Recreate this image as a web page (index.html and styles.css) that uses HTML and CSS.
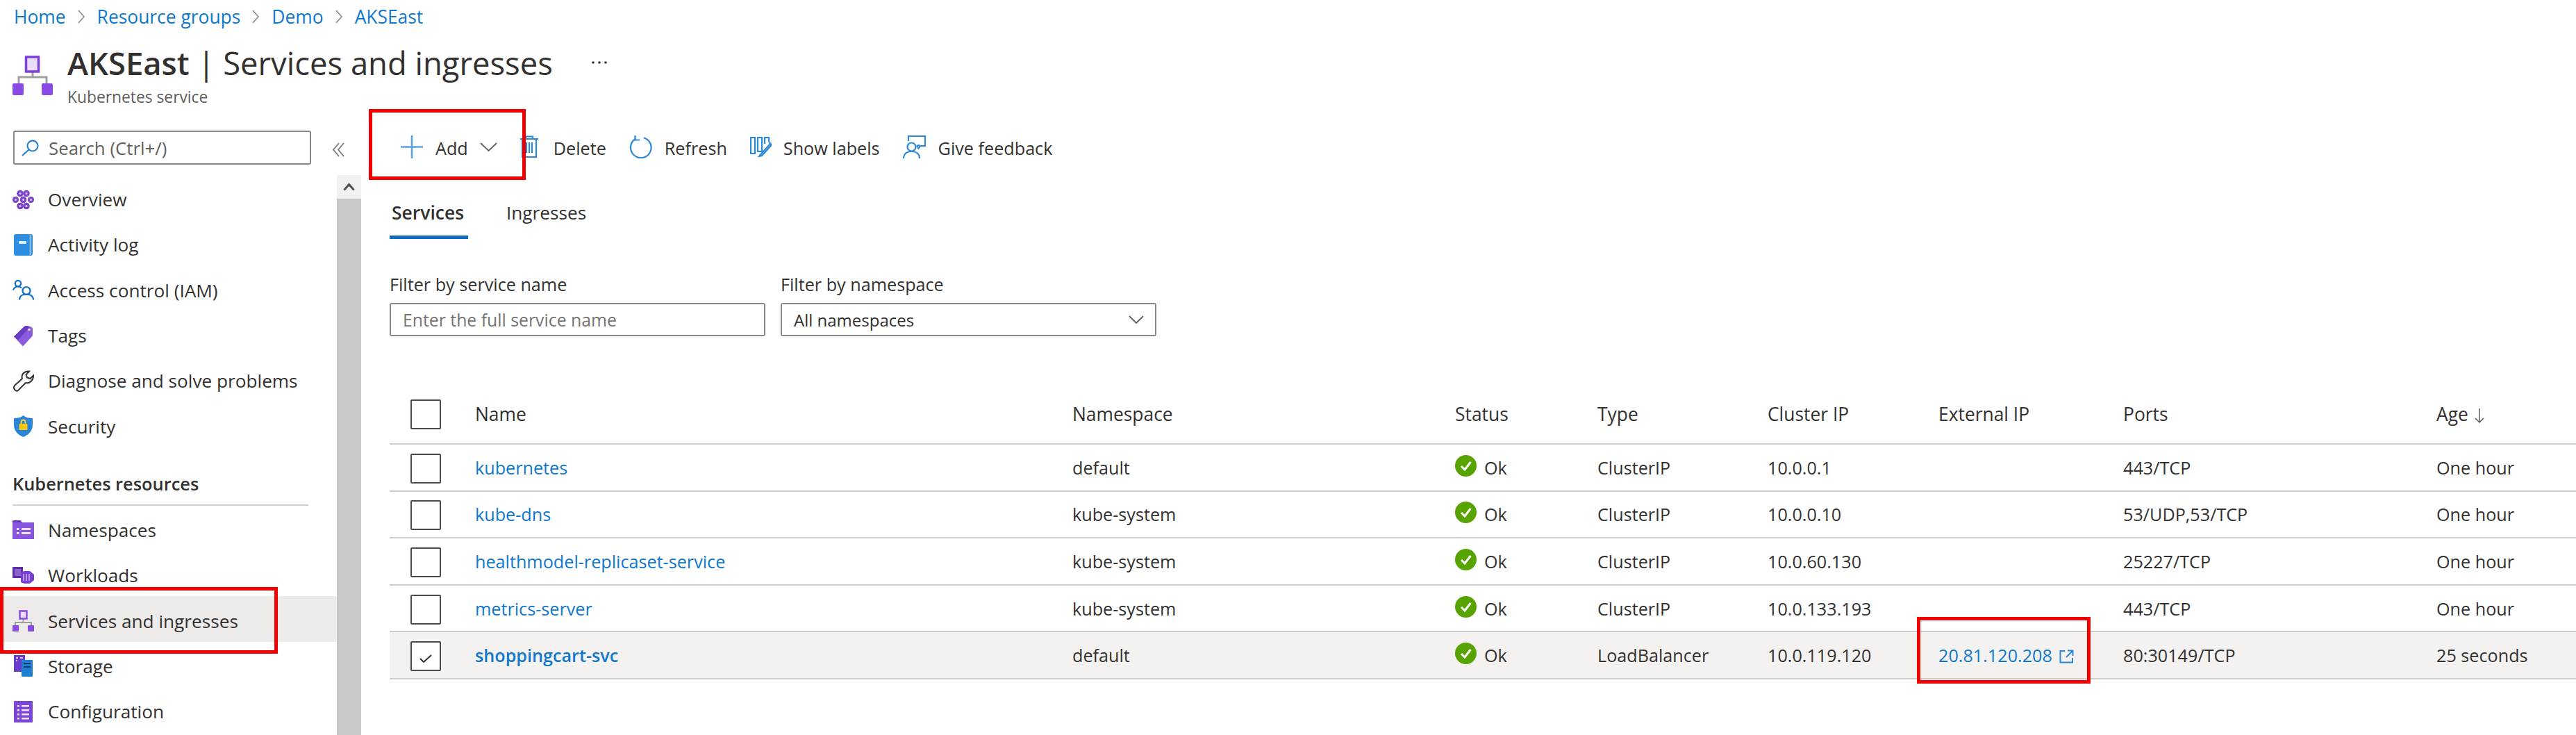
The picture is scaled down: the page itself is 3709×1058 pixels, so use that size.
FILE: index.html
```html
<!DOCTYPE html>
<html lang="en">
<head>
  <meta charset="UTF-8" />
  <title>AKSEast | Services and ingresses</title>
  <link rel="stylesheet" href="styles.css">
</head>
<body>

  <!-- Status icon used in every row -->
  <svg class="defs" width="0" height="0">
    <symbol id="ok" viewBox="0 0 31 31">
      <circle cx="15.5" cy="15.5" r="15.5" fill="#57a300"/>
      <path d="M9 16l5 5 8.500-11" fill="none" stroke="#fff" stroke-width="3"/>
    </symbol>
  </svg>

  <nav class="breadcrumb">
    <a href="#">Home</a>
    <svg class="crumb-sep" viewBox="0 0 10 20"><path d="M1 1l8 9-8 9"/></svg>
    <a href="#">Resource groups</a>
    <svg class="crumb-sep" viewBox="0 0 10 20"><path d="M1 1l8 9-8 9"/></svg>
    <a href="#">Demo</a>
    <svg class="crumb-sep" viewBox="0 0 10 20"><path d="M1 1l8 9-8 9"/></svg>
    <a href="#">AKSEast</a>
  </nav>

  <header class="blade-header">
    <svg class="blade-icon" viewBox="0 0 58 58">
      <path d="M29 24v7M9 42V31h40v11" fill="none" stroke="#a0a0a0" stroke-width="3"/>
      <rect x="19.500" y="2" width="18" height="21" fill="#e9defb" stroke="#7b3fe0" stroke-width="3.500"/>
      <rect x="0" y="40" width="16" height="17" rx="2" fill="#8a4be4"/>
      <rect x="42" y="40" width="16" height="17" rx="2" fill="#8a4be4"/>
    </svg>
    <div class="blade-titles">
      <div class="title-row">
        <h1><strong>AKSEast</strong> | Services and ingresses</h1>
        <svg class="more" viewBox="0 0 22 4"><circle cx="2" cy="2" r="1.800"/><circle cx="11" cy="2" r="1.800"/><circle cx="20" cy="2" r="1.800"/></svg>
      </div>
      <div class="subtitle">Kubernetes service</div>
    </div>
  </header>

  <div class="blade">
    <aside class="sidebar">
      <div class="side-top">
        <div class="search">
          <svg class="search-icon" viewBox="0 0 27 24"><circle cx="17" cy="9" r="7.500"/><path d="M11.500 14.500L2 23"/></svg>
          <span>Search (Ctrl+/)</span>
        </div>
        <svg class="collapse" viewBox="0 0 17 21"><path d="M9 1L1 10.500 9 20M16 1L8 10.500 16 20"/></svg>
      </div>

      <div class="side-body">
        <ul class="nav">
          <li class="nav-item">
            <svg class="nav-icon" viewBox="0 0 31 28">
              <g fill="#7a43c8">
                <circle cx="11" cy="5" r="4.800"/><circle cx="20" cy="5" r="4.800"/>
                <circle cx="4.500" cy="14" r="4.500"/><circle cx="15.500" cy="14" r="4.800"/><circle cx="26.500" cy="14" r="4.500"/>
                <circle cx="11" cy="23" r="4.800"/><circle cx="20" cy="23" r="4.800"/>
              </g>
              <g fill="#d9c6f7">
                <circle cx="11" cy="5" r="1.600"/><circle cx="20" cy="5" r="1.600"/>
                <circle cx="4.500" cy="14" r="1.600"/><circle cx="15.500" cy="14" r="1.600"/><circle cx="26.500" cy="14" r="1.600"/>
                <circle cx="11" cy="23" r="1.600"/><circle cx="20" cy="23" r="1.600"/>
              </g>
            </svg>
            Overview
          </li>
          <li class="nav-item">
            <svg class="nav-icon" viewBox="0 0 31 31">
              <rect x="2" y="0" width="27" height="31" rx="3" fill="#2c8fe4"/>
              <path d="M25.500 1v29" stroke="#a6d2f6" stroke-width="1.500"/>
              <rect x="9" y="10" width="11" height="4" rx="1" fill="#e4eef9"/>
            </svg>
            Activity log
          </li>
          <li class="nav-item">
            <svg class="nav-icon" viewBox="0 0 31 30" fill="none" stroke="#0f6fc6" stroke-width="2.200">
              <circle cx="8" cy="5.500" r="4.200"/>
              <path d="M1 15c1-3 4-5 7-5 2 0 4 1 5 2"/>
              <circle cx="20" cy="16" r="5.500"/>
              <path d="M10 29c0-5 4-8 10-8s10 3 10 8"/>
            </svg>
            Access control (IAM)
          </li>
          <li class="nav-item">
            <svg class="nav-icon" viewBox="0 0 31 30">
              <path d="M2 16L17 1.500Q18.500 0 21 0.500l6 1.500q2 1 2 3v8q0 2-1.500 3.500L15 30z" fill="#8a5bdc"/>
              <path d="M2 16L17 1.500Q18.500 0 21 0.500L25 2 8 21z" fill="#6a3cc4"/>
              <circle cx="24" cy="6" r="1.600" fill="#fff"/>
            </svg>
            Tags
          </li>
          <li class="nav-item">
            <svg class="nav-icon" viewBox="0 0 31 31">
              <path d="M3 22l11-10C12 6 17 1 24 1.500L19.500 6.500l1.500 4 4.500 1.500 4.500-4.500C30.500 14 25 19.500 19 18L8 29c-3 2.500-8-3-5-7z" fill="none" stroke="#323130" stroke-width="2"/>
            </svg>
            Diagnose and solve problems
          </li>
          <li class="nav-item">
            <svg class="nav-icon" viewBox="0 0 31 31">
              <path d="M15.500 0c3.500 3 8.500 4 13.500 4v10c0 8-6 14-13.500 17C8 28 2 22 2 14V4c5 0 10-1 13.500-4z" fill="#2a85d8"/>
              <path d="M12.500 12V9.500a3 3 0 0 1 6 0V12" fill="none" stroke="#f4d03f" stroke-width="2"/>
              <rect x="9.500" y="12" width="12" height="9" rx="1" fill="#f2c811"/>
            </svg>
            Security
          </li>
        </ul>

        <h2 class="nav-heading">Kubernetes resources</h2>

        <ul class="nav">
          <li class="nav-item">
            <svg class="nav-icon" viewBox="0 0 31 27">
              <path d="M0 2q0-2 2-2h9l3 3h17v24H0z" fill="#8755e0"/>
              <path d="M0 2q0-2 2-2h9l3 3H0z" fill="#6a35bf"/>
              <g fill="#ede4fc">
                <rect x="6" y="11" width="3.500" height="3"/><rect x="13" y="11" width="13" height="3"/>
                <rect x="6" y="17" width="3.500" height="3"/><rect x="13" y="17" width="13" height="3"/>
              </g>
            </svg>
            Namespaces
          </li>
          <li class="nav-item">
            <svg class="nav-icon" viewBox="0 0 31 25">
              <rect x="0" y="0" width="15" height="16" fill="#5e2ea6"/>
              <rect x="3" y="3" width="9" height="10" fill="#8a63c8"/>
              <path d="M12 8l5-2h8l6 5v8l-6 5h-8l-5-2z" fill="#7a3fd2"/>
              <path d="M16 10v10M20 10v10M24 10v10" stroke="#cdb6f3" stroke-width="1.500"/>
            </svg>
            Workloads
          </li>
          <li class="nav-item nav-active">
            <svg class="nav-icon" viewBox="0 0 31 31">
              <path d="M15.500 12v6M4 26v-8h23v8" fill="none" stroke="#a0a0a0" stroke-width="2"/>
              <rect x="10.500" y="1.500" width="10" height="11" fill="#e9defb" stroke="#8a4be4" stroke-width="2.500"/>
              <rect x="0" y="22" width="9" height="9" rx="1" fill="#8a4be4"/>
              <rect x="22" y="22" width="9" height="9" rx="1" fill="#8a4be4"/>
            </svg>
            Services and ingresses
          </li>
          <li class="nav-item">
            <svg class="nav-icon" viewBox="0 0 31 31">
              <rect x="2" y="0" width="16" height="24" fill="#6b3bc9"/>
              <path d="M5 4h3M5 8h2M11 4h4" stroke="#d9c6f7" stroke-width="2"/>
              <rect x="13" y="7" width="16" height="24" rx="1" fill="#1d7fd1"/>
              <path d="M16 12h10M16 17h10" stroke="#123a66" stroke-width="2"/>
            </svg>
            Storage
          </li>
          <li class="nav-item">
            <svg class="nav-icon" viewBox="0 0 31 31">
              <rect x="2" y="0" width="27" height="31" rx="1" fill="#7b45d8"/>
              <g fill="#efe7fd">
                <rect x="7" y="6" width="3" height="2.500"/><rect x="13" y="6" width="11" height="2.500"/>
                <rect x="7" y="12" width="3" height="2.500"/><rect x="13" y="12" width="11" height="2.500"/>
                <rect x="7" y="18" width="3" height="2.500"/><rect x="13" y="18" width="11" height="2.500"/>
                <rect x="7" y="24" width="3" height="2.500"/><rect x="13" y="24" width="11" height="2.500"/>
              </g>
            </svg>
            Configuration
          </li>
        </ul>

        <div class="scrollbar">
          <div class="scroll-up">
            <svg viewBox="0 0 17 12"><path d="M1.500 10.500L8.500 2.500l7 8"/></svg>
          </div>
          <div class="scroll-thumb"></div>
        </div>
      </div>
    </aside>

    <main class="content">
      <div class="toolbar">
        <div class="cmd cmd-add">
          <svg class="ico-add" viewBox="0 0 32 33"><path d="M16 0v33M0 16.500h32"/></svg>
          <span>Add</span>
          <svg class="ico-chevron" viewBox="0 0 25 13"><path d="M1 1l11.500 11L24 1"/></svg>
        </div>
        <div class="cmd cmd-delete">
          <svg class="ico-delete" viewBox="0 0 26 32"><path d="M0 5h26M8 5V1.500h10V5M3 5v26h20V5M9 10v15M13 10v15M17 10v15"/></svg>
          <span>Delete</span>
        </div>
        <div class="cmd cmd-refresh">
          <svg class="ico-refresh" viewBox="0 0 33 33"><path d="M21 3.200A14.800 14.800 0 1 1 8 5.500M8.500 0v6.500H15"/></svg>
          <span>Refresh</span>
        </div>
        <div class="cmd cmd-labels">
          <svg class="ico-labels" viewBox="0 0 31 29"><path d="M1 1h6v23H1zM11 1h6v20h-6zM21 10V1h6v6M29.500 9.500L15.500 25 13 28l4-1 14-15.500zM27 8l3 3"/></svg>
          <span>Show labels</span>
        </div>
        <div class="cmd cmd-feedback">
          <svg class="ico-feedback" viewBox="0 0 33 33"><path d="M8 8V1h24v14h-7l-2.500 3.500L20 14.500M21 14l4 .5"/><circle cx="12.500" cy="16.500" r="6"/><path d="M1 33c0-7 5-10 11.500-10S24 26 24 33"/></svg>
          <span>Give feedback</span>
        </div>
      </div>

      <div class="tabs">
        <div class="tab tab-active">Services</div>
        <div class="tab">Ingresses</div>
      </div>

      <div class="filters">
        <div class="field">
          <label>Filter by service name</label>
          <div class="input placeholder">Enter the full service name</div>
        </div>
        <div class="field">
          <label>Filter by namespace</label>
          <div class="input select">
            All namespaces
            <svg viewBox="0 0 22 12"><path d="M1 1l10 10L21 1"/></svg>
          </div>
        </div>
      </div>

      <table class="grid">
        <colgroup>
          <col class="c-check"><col class="c-name"><col class="c-ns"><col class="c-status"><col class="c-type"><col class="c-cluster"><col class="c-ext"><col class="c-ports"><col class="c-age">
        </colgroup>
        <thead>
          <tr>
            <th><span class="check check-head"></span></th>
            <th>Name</th>
            <th>Namespace</th>
            <th>Status</th>
            <th>Type</th>
            <th>Cluster IP</th>
            <th>External IP</th>
            <th>Ports</th>
            <th>Age <svg class="sort" viewBox="0 0 14 21"><path d="M7 0v20M1 14l6 6 6-6"/></svg></th>
          </tr>
        </thead>
        <tbody>
          <tr>
            <td><span class="check"></span></td>
            <td><a href="#">kubernetes</a></td>
            <td>default</td>
            <td><span class="status"><svg><use href="#ok"/></svg>Ok</span></td>
            <td>ClusterIP</td>
            <td>10.0.0.1</td>
            <td></td>
            <td>443/TCP</td>
            <td>One hour</td>
          </tr>
          <tr>
            <td><span class="check"></span></td>
            <td><a href="#">kube-dns</a></td>
            <td>kube-system</td>
            <td><span class="status"><svg><use href="#ok"/></svg>Ok</span></td>
            <td>ClusterIP</td>
            <td>10.0.0.10</td>
            <td></td>
            <td>53/UDP,53/TCP</td>
            <td>One hour</td>
          </tr>
          <tr>
            <td><span class="check"></span></td>
            <td><a href="#">healthmodel-replicaset-service</a></td>
            <td>kube-system</td>
            <td><span class="status"><svg><use href="#ok"/></svg>Ok</span></td>
            <td>ClusterIP</td>
            <td>10.0.60.130</td>
            <td></td>
            <td>25227/TCP</td>
            <td>One hour</td>
          </tr>
          <tr>
            <td><span class="check"></span></td>
            <td><a href="#">metrics-server</a></td>
            <td>kube-system</td>
            <td><span class="status"><svg><use href="#ok"/></svg>Ok</span></td>
            <td>ClusterIP</td>
            <td>10.0.133.193</td>
            <td></td>
            <td>443/TCP</td>
            <td>One hour</td>
          </tr>
          <tr class="row-selected">
            <td><span class="check"><svg viewBox="0 0 18 12"><path d="M1 6l5 5L17 1"/></svg></span></td>
            <td><a class="strong" href="#">shoppingcart-svc</a></td>
            <td>default</td>
            <td><span class="status"><svg><use href="#ok"/></svg>Ok</span></td>
            <td>LoadBalancer</td>
            <td>10.0.119.120</td>
            <td><a href="#">20.81.120.208</a><svg class="ext-link" viewBox="0 0 21 20"><path d="M8 2H1.500v16.500H19V12M12 1.500h7.500V9M19 2l-9 9"/></svg></td>
            <td>80:30149/TCP</td>
            <td>25 seconds</td>
          </tr>
        </tbody>
      </table>
    </main>
  </div>

  <!-- Red annotation boxes drawn over the screenshot -->
  <div class="mark mark-add"></div>
  <div class="mark mark-nav"></div>
  <div class="mark mark-ip"></div>

</body>
</html>
```

FILE: styles.css
```css
html, body {
  margin: 0;
  height: 100%;
  overflow: hidden;
}
body {
  position: relative;
  font-family: "Open Sans", "Noto Sans", Arial, sans-serif;
  font-size: 25.200px;
  color: #323130;
  background-color: #fff;
}
a {
  color: #0f78cc;
  text-decoration: none;
}
ul {
  list-style: none;
  margin: 0;
  padding: 0;
}
.defs {
  position: absolute;
}

/* Breadcrumb */
.breadcrumb {
  display: flex;
  align-items: center;
  height: 48px;
  padding: 0 0 2px 20px;
  font-size: 26.400px;
}
.crumb-sep {
  width: 10px;
  height: 22px;
  margin: 0 18px 0 17px;
  fill: none;
  stroke: #8a8886;
  stroke-width: 1.500;
}

/* Blade header */
.blade-header {
  display: flex;
  height: 115px;
  padding-left: 18px;
}
.blade-icon {
  width: 58px;
  height: 58px;
  margin-top: 30px;
  margin-right: 21px;
}
.blade-titles {
  padding-top: 10px;
}
.title-row {
  display: flex;
  align-items: center;
  height: 60px;
}
h1 {
  margin: 0;
  font-size: 45.400px;
  font-weight: 400;
  line-height: 60px;
}
h1 strong {
  font-weight: 600;
}
.more {
  width: 22px;
  height: 4px;
  margin-left: 56px;
  fill: #323130;
}
.subtitle {
  margin-top: 5px;
  font-size: 22.800px;
  line-height: 30px;
  color: #605e5c;
}

.blade {
  display: flex;
  height: 893px;
}

/* Sidebar */
.sidebar {
  flex: none;
  width: 520px;
}
.side-top {
  display: flex;
  align-items: flex-start;
  height: 87px;
  padding: 23px 0 0 19px;
  box-sizing: border-box;
}
.search {
  display: flex;
  align-items: center;
  box-sizing: border-box;
  width: 429px;
  height: 49px;
  padding-left: 9px;
  border: 2px solid #8a8886;
  border-radius: 3px;
  font-size: 25.800px;
  color: #605e5c;
}
.search-icon {
  width: 27px;
  height: 24px;
  margin-right: 13px;
  fill: none;
  stroke: #1a7fd0;
  stroke-width: 2;
}
.collapse {
  width: 17px;
  height: 21px;
  margin: 17px 0 0 31px;
  fill: none;
  stroke: #7a7876;
  stroke-width: 1.800;
}
.side-body {
  position: relative;
  height: 806px;
}
.nav-item {
  display: flex;
  align-items: center;
  width: 485px;
  height: 65.300px;
  padding: 5px 0 0 18px;
  box-sizing: border-box;
  font-size: 26.200px;
}
.nav-active {
  background-color: #edebe9;
}
.nav-icon {
  flex: none;
  width: 31px;
  height: 31px;
  margin-right: 20px;
}
.nav-heading {
  box-sizing: border-box;
  width: 426px;
  height: 84px;
  margin: 0 0 0 18px;
  padding-top: 38px;
  border-bottom: 2px solid #d2d0ce;
  font-size: 25.400px;
  font-weight: 600;
  line-height: 28px;
}

/* Scrollbar */
.scrollbar {
  position: absolute;
  top: 0;
  bottom: 0;
  left: 485px;
  width: 35px;
  background-color: #c8c8c8;
}
.scroll-up {
  display: flex;
  align-items: center;
  justify-content: center;
  height: 34px;
  background-color: #f1f1f1;
}
.scroll-up svg {
  width: 17px;
  height: 12px;
  fill: none;
  stroke: #505050;
  stroke-width: 3;
}

/* Main column */
.content {
  flex: 1;
  min-width: 0;
}
.toolbar {
  display: flex;
  align-items: center;
  height: 92px;
  padding-left: 57px;
}
.cmd {
  display: flex;
  align-items: center;
  margin-right: 33px;
}
.cmd span {
  padding-top: 4px;
}
.cmd svg {
  flex: none;
  fill: none;
  stroke: #2b88d8;
  stroke-width: 2.200;
}
.cmd-add svg.ico-add {
  width: 32px;
  height: 33px;
  margin-right: 18px;
  stroke: #5ba3dc;
  stroke-width: 2.600;
}
.cmd-add svg.ico-chevron {
  width: 25px;
  height: 13px;
  margin-left: 17px;
  stroke: #605e5c;
  stroke-width: 1.800;
}
.ico-delete {
  width: 26px;
  height: 32px;
  margin-right: 22px;
}
.ico-refresh {
  width: 33px;
  height: 33px;
  margin-right: 18px;
}
.ico-labels {
  width: 31px;
  height: 29px;
  margin-right: 17px;
}
.ico-feedback {
  width: 33px;
  height: 33px;
  margin-right: 18px;
}

/* Tabs */
.tabs {
  display: flex;
  height: 87px;
  margin-left: 41px;
}
.tab {
  margin-right: 55px;
  padding-top: 32px;
  font-size: 26.200px;
  line-height: 34px;
  box-sizing: border-box;
}
.tab-active {
  width: 113px;
  padding-left: 3px;
  border-bottom: 5px solid #0f6cbd;
  font-size: 26.500px;
  font-weight: 600;
}

/* Filters */
.filters {
  display: flex;
  gap: 22px;
  margin: 50px 0 0 41px;
}
.field {
  width: 541px;
}
.field label {
  display: block;
  margin-bottom: 12px;
  line-height: 30px;
}
.input {
  display: flex;
  align-items: center;
  box-sizing: border-box;
  height: 48px;
  padding-left: 17px;
  border: 2px solid #8a8886;
  border-radius: 3px;
  font-size: 24.800px;
}
.placeholder {
  color: #767472;
}
.select {
  justify-content: space-between;
  padding-right: 16px;
  font-size: 24px;
}
.select svg {
  width: 22px;
  height: 12px;
  fill: none;
  stroke: #605e5c;
  stroke-width: 1.800;
}

/* Services grid */
.grid {
  width: 3148px;
  margin: 70px 0 0 41px;
  table-layout: fixed;
  border-collapse: separate;
  border-spacing: 0;
}
.c-check { width: 123px; }
.c-name { width: 860px; }
.c-ns { width: 551px; }
.c-status { width: 205px; }
.c-type { width: 245px; }
.c-cluster { width: 246px; }
.c-ext { width: 266px; }
.c-ports { width: 451px; }
.c-age { width: 201px; }
th, td {
  box-sizing: border-box;
  height: 67.600px;
  padding: 0;
  border-bottom: 2px solid #cfcdcb;
  font-weight: 400;
  text-align: left;
  white-space: nowrap;
}
th {
  height: 86px;
  font-size: 26.400px;
}
.row-selected td {
  background-color: #f3f2f1;
}
.strong {
  font-weight: 600;
}
.check {
  display: flex;
  align-items: center;
  justify-content: center;
  box-sizing: border-box;
  width: 44px;
  height: 43px;
  margin: 3px 0 0 30px;
  border: 2.500px solid #4a4a4a;
  border-radius: 2px;
  background-color: #fff;
}
.check svg {
  width: 18px;
  height: 12px;
  margin-top: 6px;
  fill: none;
  stroke: #323130;
  stroke-width: 2;
}
.check-head {
  margin-top: 0;
}
.status {
  display: flex;
  align-items: center;
}
.status svg {
  width: 31px;
  height: 31px;
  margin: -5px 11px 0 0;
}
.sort {
  width: 14px;
  height: 21px;
  margin-left: 2px;
  vertical-align: -3px;
  fill: none;
  stroke: #605e5c;
  stroke-width: 1.500;
}
.ext-link {
  width: 21px;
  height: 20px;
  margin-left: 10px;
  vertical-align: -2px;
  fill: none;
  stroke: #2b88d8;
  stroke-width: 2;
}

/* Red annotation boxes */
.mark {
  position: absolute;
  box-sizing: border-box;
  border: 5px solid #f00000;
}
.mark-add {
  top: 157px;
  left: 531px;
  width: 226px;
  height: 102px;
}
.mark-nav {
  top: 845px;
  left: 0;
  width: 400px;
  height: 96px;
}
.mark-ip {
  top: 888px;
  left: 2760px;
  width: 250px;
  height: 96px;
}
```
